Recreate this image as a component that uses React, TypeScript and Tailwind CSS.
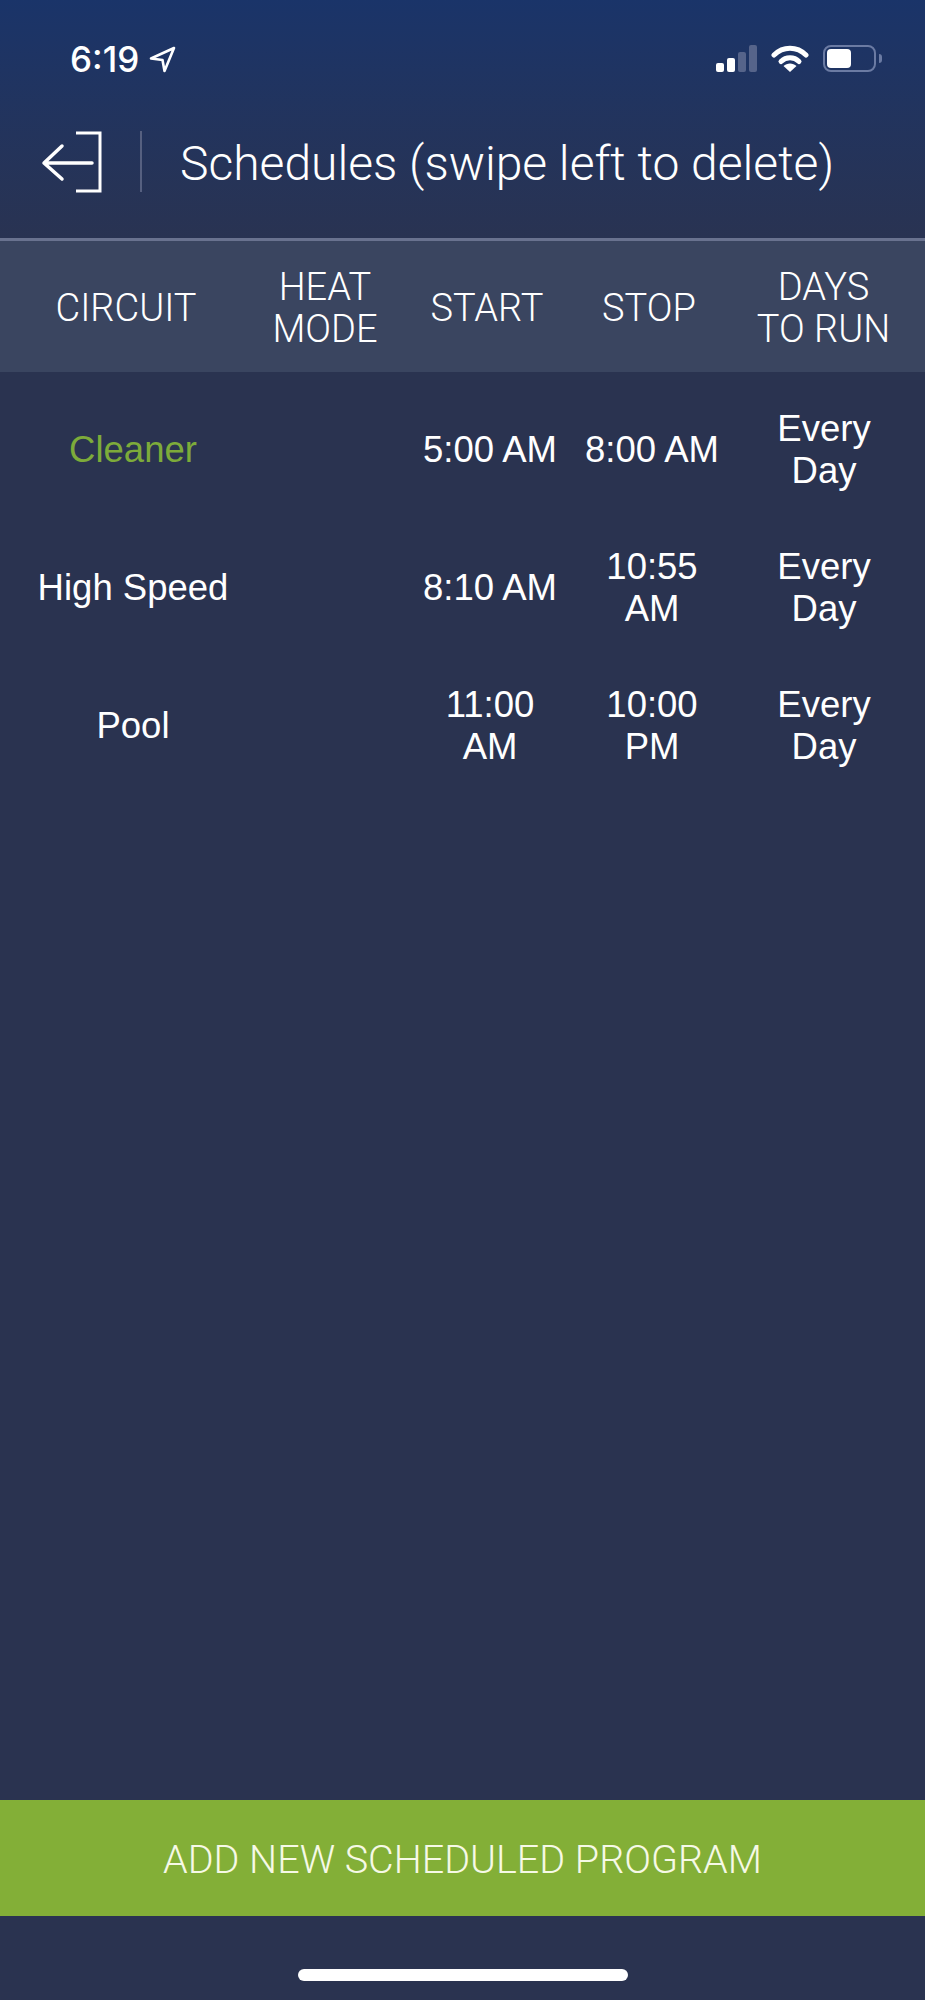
const rows = [
  { circuit: "Cleaner", green: true, start: ["5:00 AM"], stop: ["8:00 AM"] },
  { circuit: "High Speed", green: false, start: ["8:10 AM"], stop: ["10:55", "AM"] },
  { circuit: "Pool", green: false, start: ["11:00", "AM"], stop: ["10:00", "PM"] },
];

const Lines = ({ lines }: { lines: string[] }) => (
  <div className="text-center leading-[42px]">
    {lines.map((line) => (
      <div key={line} className="whitespace-nowrap">
        {line}
      </div>
    ))}
  </div>
);

const StatusBar = () => (
  <div className="flex h-[127px] items-start justify-between pl-[70px] pr-[43px] pt-[41px]">
    <div className="flex items-center gap-[10px]">
      <span className="font-['Inter',sans-serif] text-[35px] font-medium leading-[36px] tracking-[0px] text-white">
        6:19
      </span>
      <svg width="27" height="27" viewBox="0 0 27 27" fill="none">
        <path
          d="M25 2 L2 12.5 L13.5 14 L15.5 25 Z"
          stroke="white"
          strokeWidth="2.6"
          strokeLinejoin="round"
        />
      </svg>
    </div>
    <div className="mt-[4px] flex items-start">
      <svg width="41" height="27" viewBox="0 0 41 27" className="mr-[14px]">
        <rect x="0" y="18" width="8" height="9" rx="2" fill="white" />
        <rect x="11" y="13" width="8" height="14" rx="2" fill="white" />
        <rect x="22" y="7" width="8" height="20" rx="2" fill="#56648a" />
        <rect x="33" y="0" width="8" height="27" rx="2" fill="#56648a" />
      </svg>
      <svg width="38" height="27" viewBox="0 0 38 27" className="mr-[14px]" fill="none">
        <path d="M3 10 C12 1 26 1 35 10" stroke="white" strokeWidth="5" strokeLinecap="round" />
        <path d="M10 16.5 C15 11.5 23 11.5 28 16.5" stroke="white" strokeWidth="5" strokeLinecap="round" />
        <path d="M12.5 21 L19 27 L25.5 21 C22 17.5 16 17.5 12.5 21 Z" fill="white" />
      </svg>
      <div className="flex items-center">
        <div className="h-[27px] w-[53px] rounded-[8px] border-[2.5px] border-[#6b7ba3] p-[2px]">
          <div className="h-full w-[24px] rounded-[4px] bg-white" />
        </div>
        <div className="ml-[3px] h-[9px] w-[3px] rounded-r-full bg-[#6b7ba3]" />
      </div>
    </div>
  </div>
);

export default function App() {
  return (
    <div className="flex h-[2000px] w-[925px] flex-col overflow-hidden bg-[#2a3350] font-['Liberation_Sans',sans-serif] text-white">
      <div className="h-[238px] bg-gradient-to-b from-[#1a3469] to-[#293352]">
        <StatusBar />
        <div className="flex items-center">
          <svg width="62" height="64" viewBox="0 0 62 64" fill="none" className="ml-[41px]">
            <path d="M35 3 H59 V61 H35" stroke="white" strokeWidth="3" />
            <path d="M51 33 H4 M21 16 L3 33 L21 49" stroke="white" strokeWidth="3.5" strokeLinecap="round" strokeLinejoin="round" />
          </svg>
          <div className="ml-[37px] h-[61px] w-[2px] bg-[#566080]" />
          <h1 className="ml-[38px] whitespace-nowrap pt-[5px] font-['Roboto',sans-serif] text-[48px] font-light leading-[64px] text-white">
            Schedules (swipe left to delete)
          </h1>
        </div>
      </div>

      <div className="h-[3px] bg-[#69728f]" />

      <div className="grid h-[131px] grid-cols-[252px_146px_178px_146px_203px] items-center bg-[#3a4560] pt-[2px] font-['Roboto',sans-serif] text-[38px] font-light">
        <Lines lines={["CIRCUIT"]} />
        <Lines lines={["HEAT", "MODE"]} />
        <Lines lines={["START"]} />
        <Lines lines={["STOP"]} />
        <Lines lines={["DAYS", "TO RUN"]} />
      </div>

      <div className="flex-1 pt-[9px] text-[36.5px]">
        {rows.map((row) => (
          <div
            key={row.circuit}
            className="grid h-[138px] grid-cols-[266px_149px_150px_174px_170px] items-center"
          >
            <div className={row.green ? "text-center text-[#7dab3a]" : "text-center"}>{row.circuit}</div>
            <div />
            <Lines lines={row.start} />
            <Lines lines={row.stop} />
            <Lines lines={["Every", "Day"]} />
          </div>
        ))}
      </div>

      <button className="flex h-[116px] shrink-0 items-center justify-center bg-[#83af37] pt-[3px] font-['Roboto',sans-serif] text-[39.5px] font-light text-[#f6f9e6]">
        ADD NEW SCHEDULED PROGRAM
      </button>

      <div className="flex h-[84px] shrink-0 justify-center pt-[53px]">
        <div className="h-[12px] w-[330px] rounded-full bg-white" />
      </div>
    </div>
  );
}
